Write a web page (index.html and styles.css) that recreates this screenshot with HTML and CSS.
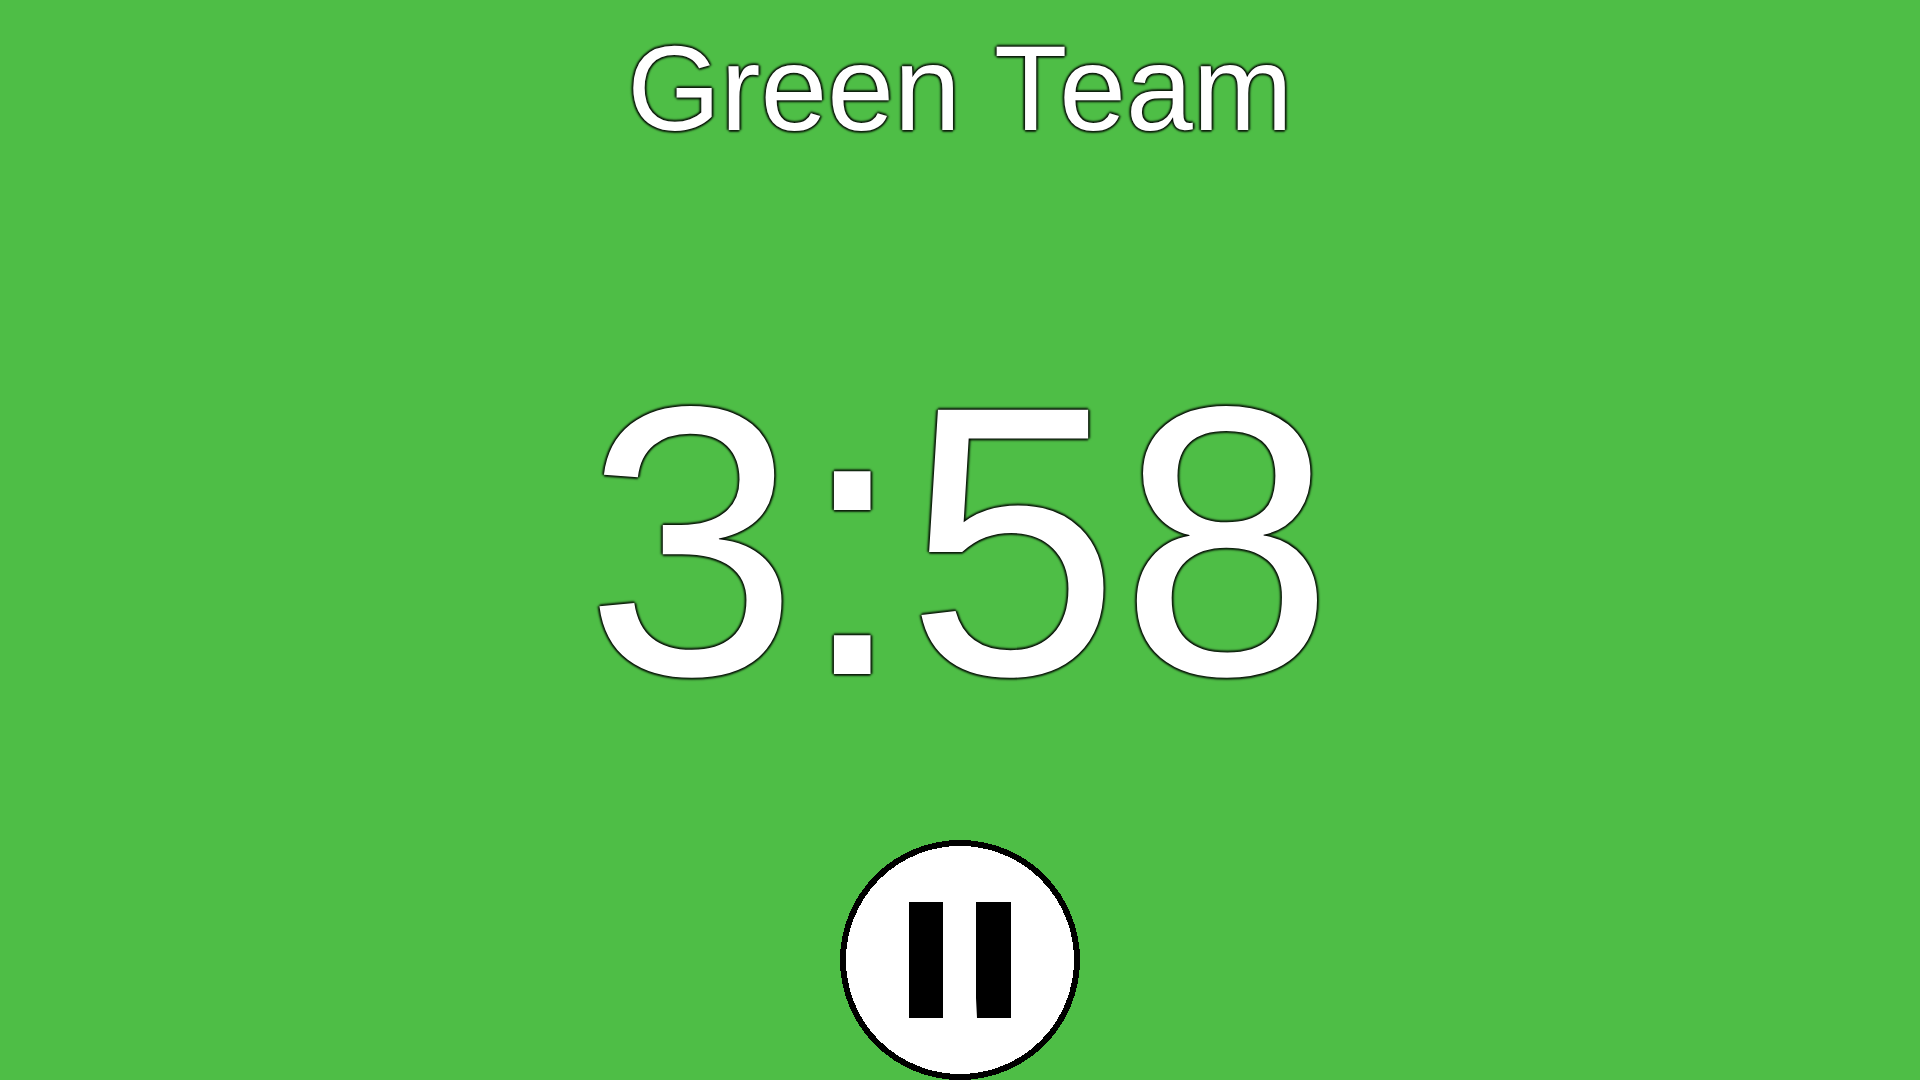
FILE: index.html
```html
<!DOCTYPE html>
<html lang="en">
<head>
    <meta charset="UTF-8">
    <meta name="viewport" content="width=device-width, initial-scale=1.0">
    <title>Team Timer</title>
    <link rel="stylesheet" href="styles.css">
</head>
<body>
    <div class="container">
        <h1 class="team-name">Green <span class="kern">T</span>eam</h1>
        <div class="timer">3:58</div>
        <button class="pause-btn" aria-label="Pause">
            <svg viewBox="0 0 240 240">
                <circle cx="120" cy="120" r="117" fill="#fff" stroke="#000" stroke-width="6" shape-rendering="crispEdges"/>
                <path d="M69 62H103V178H69ZM136 62H171V178H137L136 158Z"/>
            </svg>
        </button>
    </div>
</body>
</html>
```
FILE: styles.css
```css
body {
    margin: 0;
    background-color: #4ebe46;
    color: white;
    font-family: "Liberation Sans", Arial, sans-serif;
}

.container {
    --outline: rgba(0, 0, 0, 0.75);
    display: flex;
    flex-direction: column;
    align-items: center;
    height: 100vh;
    overflow: hidden;
    text-shadow: -2px 0 2px var(--outline), 0 2px 2px var(--outline), 2px 0 2px var(--outline), 0 -2px 2px var(--outline);
}

.team-name {
    margin: 19px 0 0;
    font-size: 120px;
    line-height: 138px;
    font-weight: normal;
    font-kerning: none;
}

.kern {
    letter-spacing: -8px;
}

.timer {
    margin: 161px 1px 0 0;
    font-size: 384px;
    line-height: 446px;
    letter-spacing: 0.5px;
}

.pause-btn {
    width: 240px;
    height: 240px;
    margin-top: 76px;
    padding: 0;
    border: none;
    background: none;
    cursor: pointer;
}

.pause-btn svg {
    display: block;
}
```
